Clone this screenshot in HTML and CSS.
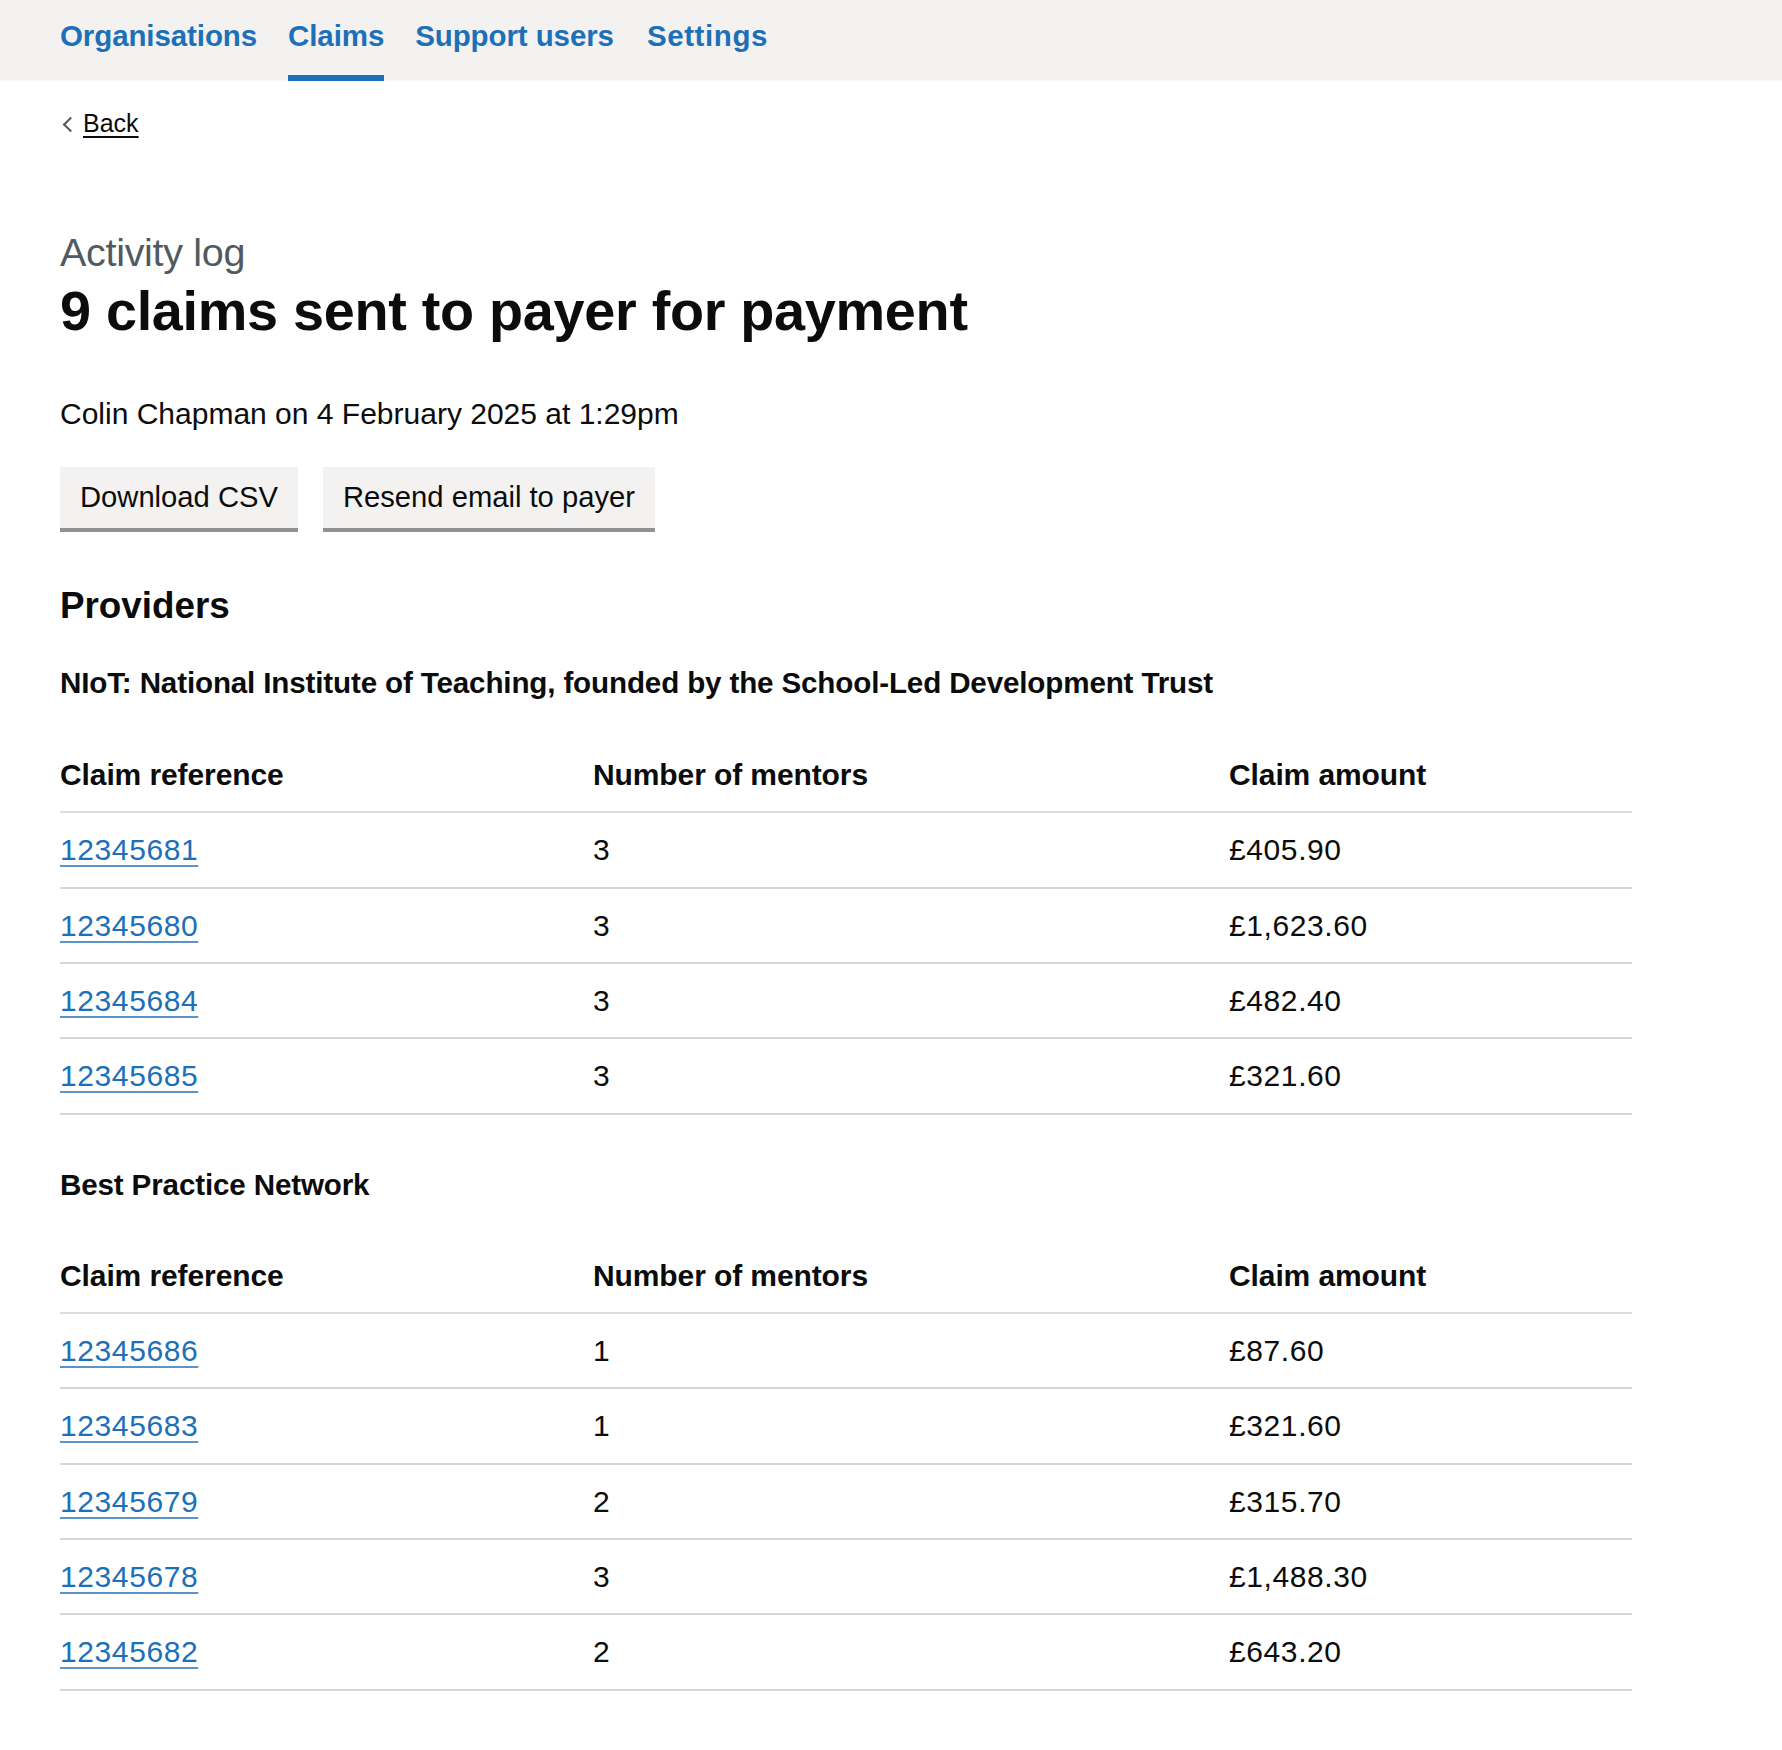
FILE: index.html
```html
<!DOCTYPE html>
<html lang="en">
<head>
<meta charset="utf-8">
<title>Activity log - 9 claims sent to payer for payment</title>
<link rel="stylesheet" href="styles.css">
</head>
<body>
<header class="service-nav">
  <nav class="service-nav__inner">
    <a class="service-nav__link" href="#">Organisations</a>
    <a class="service-nav__link service-nav__link--active" href="#">Claims</a>
    <a class="service-nav__link" href="#">Support users</a>
    <a class="service-nav__link service-nav__link--wide" href="#">Settings</a>
  </nav>
</header>
<div class="page">
  <a class="back-link" href="#">Back</a>
  <main class="main">
    <span class="caption">Activity log</span>
    <h1 class="heading-l">9 claims sent to payer for payment</h1>
    <p class="meta">Colin Chapman on 4 February 2025 at 1:29pm</p>
    <div class="button-group">
      <a class="button" href="#">Download CSV</a>
      <a class="button" href="#">Resend email to payer</a>
    </div>
    <h2 class="heading-m">Providers</h2>

    <h3 class="heading-s">NIoT: National Institute of Teaching, founded by the School-Led Development Trust</h3>
    <table class="table">
      <thead>
        <tr><th class="col-ref">Claim reference</th><th class="col-num">Number of mentors</th><th class="col-amt">Claim amount</th></tr>
      </thead>
      <tbody>
        <tr><td><a class="link" href="#">12345681</a></td><td>3</td><td>£405.90</td></tr>
        <tr><td><a class="link" href="#">12345680</a></td><td>3</td><td>£1,623.60</td></tr>
        <tr><td><a class="link" href="#">12345684</a></td><td>3</td><td>£482.40</td></tr>
        <tr><td><a class="link" href="#">12345685</a></td><td>3</td><td>£321.60</td></tr>
      </tbody>
    </table>

    <h3 class="heading-s">Best Practice Network</h3>
    <table class="table">
      <thead>
        <tr><th class="col-ref">Claim reference</th><th class="col-num">Number of mentors</th><th class="col-amt">Claim amount</th></tr>
      </thead>
      <tbody>
        <tr><td><a class="link" href="#">12345686</a></td><td>1</td><td>£87.60</td></tr>
        <tr><td><a class="link" href="#">12345683</a></td><td>1</td><td>£321.60</td></tr>
        <tr><td><a class="link" href="#">12345679</a></td><td>2</td><td>£315.70</td></tr>
        <tr><td><a class="link" href="#">12345678</a></td><td>3</td><td>£1,488.30</td></tr>
        <tr><td><a class="link" href="#">12345682</a></td><td>2</td><td>£643.20</td></tr>
      </tbody>
    </table>
  </main>
</div>
</body>
</html>
```
FILE: styles.css
```css
* { box-sizing: border-box; }

html, body {
  margin: 0;
  padding: 0;
  background: #ffffff;
  color: #0b0c0c;
  font-family: "Liberation Sans", Arial, sans-serif;
}

.service-nav {
  background: #f3f2f1;
  height: 80px;
  box-shadow: 0 1px 2px rgba(0,0,0,0.04);
}

.service-nav__inner {
  display: flex;
  gap: 31px;
  padding-left: 60px;
  height: 80px;
}

.service-nav__link {
  position: relative;
  display: block;
  height: 81px;
  line-height: 72px;
  font-size: 29.5px;
  font-weight: 700;
  color: #1d70b8;
  text-decoration: none;
  letter-spacing: -0.1px;
}

.service-nav__link--wide {
  margin-left: 2px;
  letter-spacing: 0.6px;
}

.service-nav__link--active::after {
  content: "";
  position: absolute;
  left: 0;
  right: 0;
  bottom: 0;
  height: 6px;
  background: #1d70b8;
}

.page {
  padding: 0 60px;
}

.back-link {
  display: inline-block;
  position: relative;
  margin-top: 27px;
  padding-left: 23px;
  font-size: 25px;
  line-height: 32px;
  color: #0b0c0c;
  text-decoration: underline;
  text-decoration-thickness: 2px;
  text-underline-offset: 4px;
}

.back-link::before {
  content: "";
  position: absolute;
  left: 5px;
  top: 12px;
  width: 9px;
  height: 9px;
  border-left: 2px solid #505a5f;
  border-bottom: 2px solid #505a5f;
  transform: rotate(45deg);
}

.main {
  padding-top: 92px;
}

.caption {
  display: block;
  font-size: 39.5px;
  line-height: 42px;
  color: #505a5f;
  letter-spacing: -0.3px;
}

.heading-l {
  margin: 8px 0 0;
  font-size: 55.8px;
  line-height: 60px;
  font-weight: 700;
  letter-spacing: -0.3px;
}

.meta {
  margin: 54px 0 0;
  font-size: 30px;
  line-height: 38px;
}

.button-group {
  display: flex;
  gap: 25px;
  margin-top: 34px;
}

.button {
  display: inline-block;
  background: #f3f2f1;
  color: #0b0c0c;
  font-size: 29.2px;
  line-height: 37px;
  padding: 12px 20px;
  text-decoration: none;
  box-shadow: 0 4px 0 #929191;
}

.heading-m {
  margin: 58px 0 0;
  font-size: 36.8px;
  line-height: 40px;
  font-weight: 700;
}

.heading-s {
  margin: 38px 0 0;
  font-size: 29.6px;
  line-height: 38px;
  font-weight: 700;
  letter-spacing: -0.15px;
}

.table + .heading-s {
  margin-top: 51px;
}

.table {
  width: 1572px;
  margin-top: 36px;
  border-collapse: collapse;
  border-spacing: 0;
  font-size: 30px;
}

.table + .heading-s + .table {
  margin-top: 35px;
}

.table th,
.table td {
  text-align: left;
  padding: 19px 20px 19px 0;
  line-height: 35.35px;
  border-bottom: 2px solid #d5d6d8;
  vertical-align: middle;
}

.table td {
  letter-spacing: 0.6px;
}

.table th {
  font-weight: 700;
  letter-spacing: -0.1px;
  border-bottom-color: #dcdddf;
}

.col-ref { width: 533px; }
.col-num { width: 636px; }
.col-amt { width: 403px; }

.link {
  color: #1d70b8;
  text-decoration: underline;
  text-decoration-thickness: 2px;
  text-decoration-color: #5d94c8;
  text-underline-offset: 5px;
}
```
